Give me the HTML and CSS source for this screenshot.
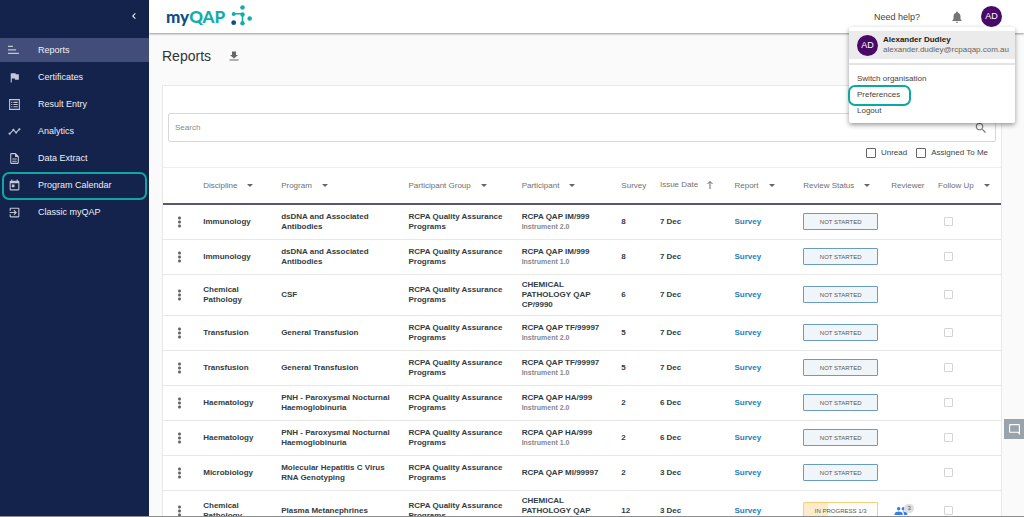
FILE: index.html
```html
<!DOCTYPE html>
<html lang="en">
<head>
<meta charset="utf-8">
<title>myQAP - Reports</title>
<link rel="stylesheet" href="styles.css">
</head>
<body>
<div class="shell">
  <aside class="sidebar">
    <div class="sidebar-top">
      <button class="collapse" aria-label="Collapse menu"><svg class="icon-xs" viewBox="0 0 24 24"><path d="M15.4 7.4 14 6l-6 6 6 6 1.4-1.4L10.800 12z"/></svg></button>
    </div>
    <nav class="nav">
      <a class="nav-item active" href="#"><svg class="icon-nav" viewBox="0 0 24 24"><path d="M0 3h9v2.500H0zM0 9.500h15V12H0zM0 16h20v2.500H0z"/></svg><span>Reports</span></a>
      <a class="nav-item" href="#"><svg class="icon-nav" viewBox="0 0 24 24"><path d="M14.400 6 14 4H5v17h2v-7h5.600l.4 2h7V6z"/></svg><span>Certificates</span></a>
      <a class="nav-item" href="#"><svg class="icon-nav" viewBox="0 0 24 24"><path d="M2 2v20h20V2H2zm18 18H4V4h16v16zM6 7h2v2H6zm0 4h2v2H6zm0 4h2v2H6zM10 7h8v2h-8zm0 4h8v2h-8zm0 4h8v2h-8z"/></svg><span>Result Entry</span></a>
      <a class="nav-item" href="#"><svg class="icon-nav" viewBox="0 0 24 24"><path d="M23 8c0 1.100-.9 2-2 2l-.5-.1-3.600 3.600.1.500a2 2 0 0 1-4 0l.1-.5-2.600-2.600-1 0-4.600 4.600.1.500a2 2 0 1 1-2-2l.5.1 4.600-4.600L8 9a2 2 0 0 1 4 0l-.1.500 2.600 2.600 1 0 3.600-3.600L19 8a2 2 0 0 1 4 0z"/></svg><span>Analytics</span></a>
      <a class="nav-item" href="#"><svg class="icon-nav" viewBox="0 0 24 24"><path d="M8 16h8v2H8zm0-4h8v2H8zm6-10H6a2 2 0 0 0-2 2v16c0 1.100.9 2 2 2h12a2 2 0 0 0 2-2V8l-6-6zm4 18H6V4h7v5h5v11z"/></svg><span>Data Extract</span></a>
      <a class="nav-item ringed" href="#"><svg class="icon-nav" viewBox="0 0 24 24"><path d="M19 3h-1V1h-2v2H8V1H6v2H5a2 2 0 0 0-2 2v14c0 1.100.9 2 2 2h14a2 2 0 0 0 2-2V5a2 2 0 0 0-2-2zm0 16H5V8h14v11zM7 10h5v5H7z"/></svg><span>Program Calendar</span></a>
      <a class="nav-item" href="#"><svg class="icon-nav" viewBox="0 0 24 24"><path d="m10.100 15.600 1.400 1.400 5-5-5-5-1.400 1.400 2.600 2.600H3v2h9.700zM19 3H5a2 2 0 0 0-2 2v4h2V5h14v14H5v-4H3v4c0 1.100.9 2 2 2h14a2 2 0 0 0 2-2V5a2 2 0 0 0-2-2z"/></svg><span>Classic myQAP</span></a>
    </nav>
  </aside>

  <div class="main">
    <header class="topbar">
      <a class="logo" href="#"><span class="logo-text"><span class="logo-my">my</span>QAP</span><svg class="logo-mark" viewBox="0 0 22 24"><g fill="#11ada9"><path stroke="#11ada9" stroke-width="1.600" fill="none" d="M2.500 8.700h9v9.500"/><circle cx="11.500" cy="2.500" r="2.300"/><circle cx="2.700" cy="9" r="2"/><circle cx="11.500" cy="9.500" r="2.200"/><circle cx="11.500" cy="18.200" r="2.200"/><circle cx="18.700" cy="13.500" r="2.300"/></g><circle cx="2.700" cy="17.700" r="2.400" fill="#0c4f8b"/></svg></a>
      <div class="topbar-right">
        <a class="help" href="#">Need help?</a>
        <button class="bell" aria-label="Notifications"><svg class="icon-md" viewBox="0 0 24 24"><path d="M12 22a2 2 0 0 0 2-2h-4c0 1.100.9 2 2 2zm6-6v-5c0-3.100-1.600-5.600-4.500-6.300V4a1.500 1.500 0 0 0-3 0v.7C7.600 5.400 6 7.900 6 11v5l-2 2v1h16v-1z"/></svg></button>
        <button class="avatar" aria-label="Account">AD</button>
      </div>
    </header>

    <div class="account-menu">
      <div class="account">
        <span class="avatar">AD</span>
        <div class="account-text"><strong>Alexander Dudley</strong><span>alexander.dudley@rcpaqap.com.au</span></div>
      </div>
      <div class="account-links">
        <a href="#">Switch organisation</a>
        <a class="ringed" href="#">Preferences</a>
        <a href="#">Logout</a>
      </div>
    </div>

    <main class="content">
      <div class="title-row">
        <h1>Reports</h1>
        <button class="download" aria-label="Download"><svg class="icon-sm" viewBox="0 0 24 24"><path d="M20 10h-4V3H8v7H4l8 7zM3 19v2h18v-2z"/></svg></button>
      </div>
      <section class="card">
        <div class="filters">
          <div class="search">
            <input type="text" placeholder="Search" aria-label="Search">
            <svg class="icon-md" viewBox="0 0 24 24"><path d="M15.500 14h-.8l-.3-.3a6.500 6.500 0 1 0-.7.7l.3.300v.8l5 5 1.500-1.500zm-6 0a4.500 4.500 0 1 1 0-9 4.500 4.500 0 0 1 0 9z"/></svg>
          </div>
          <div class="checks">
            <label><input class="check" type="checkbox">Unread</label>
            <label><input class="check" type="checkbox">Assigned To Me</label>
          </div>
        </div>
        <table class="reports">
          <colgroup><col class="c-menu"><col class="c-disc"><col class="c-prog"><col class="c-group"><col class="c-part"><col class="c-survey"><col class="c-date"><col class="c-report"><col class="c-status"><col class="c-reviewer"><col class="c-follow"></colgroup>
          <thead>
            <tr><th></th><th class="sort">Discipline</th><th class="sort">Program</th><th class="sort">Participant Group</th><th class="sort">Participant</th><th>Survey</th><th>Issue Date<svg class="arrow-up" viewBox="0 0 8 10"><path d="M4 9V1.500M1.500 4 4 1.500 6.500 4"/></svg></th><th class="sort">Report</th><th class="sort">Review Status</th><th>Reviewer</th><th class="sort">Follow Up</th></tr>
          </thead>
          <tbody>
            <tr><td><button class="more" aria-label="Row actions"></button></td><td>Immunology</td><td>dsDNA and Associated Antibodies</td><td>RCPA Quality Assurance Programs</td><td>RCPA QAP IM/999<small>Instrument 2.0</small></td><td>8</td><td>7 Dec</td><td><a href="#">Survey</a></td><td><button class="status">NOT STARTED</button></td><td></td><td><input class="follow" type="checkbox" aria-label="Follow up"></td></tr>
            <tr><td><button class="more" aria-label="Row actions"></button></td><td>Immunology</td><td>dsDNA and Associated Antibodies</td><td>RCPA Quality Assurance Programs</td><td>RCPA QAP IM/999<small>Instrument 1.0</small></td><td>8</td><td>7 Dec</td><td><a href="#">Survey</a></td><td><button class="status">NOT STARTED</button></td><td></td><td><input class="follow" type="checkbox" aria-label="Follow up"></td></tr>
            <tr><td><button class="more" aria-label="Row actions"></button></td><td>Chemical Pathology</td><td>CSF</td><td>RCPA Quality Assurance Programs</td><td>CHEMICAL PATHOLOGY QAP CP/9990</td><td>6</td><td>7 Dec</td><td><a href="#">Survey</a></td><td><button class="status">NOT STARTED</button></td><td></td><td><input class="follow" type="checkbox" aria-label="Follow up"></td></tr>
            <tr><td><button class="more" aria-label="Row actions"></button></td><td>Transfusion</td><td>General Transfusion</td><td>RCPA Quality Assurance Programs</td><td>RCPA QAP TF/99997<small>Instrument 2.0</small></td><td>5</td><td>7 Dec</td><td><a href="#">Survey</a></td><td><button class="status">NOT STARTED</button></td><td></td><td><input class="follow" type="checkbox" aria-label="Follow up"></td></tr>
            <tr><td><button class="more" aria-label="Row actions"></button></td><td>Transfusion</td><td>General Transfusion</td><td>RCPA Quality Assurance Programs</td><td>RCPA QAP TF/99997<small>Instrument 1.0</small></td><td>5</td><td>7 Dec</td><td><a href="#">Survey</a></td><td><button class="status">NOT STARTED</button></td><td></td><td><input class="follow" type="checkbox" aria-label="Follow up"></td></tr>
            <tr><td><button class="more" aria-label="Row actions"></button></td><td>Haematology</td><td>PNH - Paroxysmal Nocturnal Haemoglobinuria</td><td>RCPA Quality Assurance Programs</td><td>RCPA QAP HA/999<small>Instrument 2.0</small></td><td>2</td><td>6 Dec</td><td><a href="#">Survey</a></td><td><button class="status">NOT STARTED</button></td><td></td><td><input class="follow" type="checkbox" aria-label="Follow up"></td></tr>
            <tr><td><button class="more" aria-label="Row actions"></button></td><td>Haematology</td><td>PNH - Paroxysmal Nocturnal Haemoglobinuria</td><td>RCPA Quality Assurance Programs</td><td>RCPA QAP HA/999<small>Instrument 1.0</small></td><td>2</td><td>6 Dec</td><td><a href="#">Survey</a></td><td><button class="status">NOT STARTED</button></td><td></td><td><input class="follow" type="checkbox" aria-label="Follow up"></td></tr>
            <tr><td><button class="more" aria-label="Row actions"></button></td><td>Microbiology</td><td>Molecular Hepatitis C Virus RNA Genotyping</td><td>RCPA Quality Assurance Programs</td><td>RCPA QAP MI/99997</td><td>2</td><td>3 Dec</td><td><a href="#">Survey</a></td><td><button class="status">NOT STARTED</button></td><td></td><td><input class="follow" type="checkbox" aria-label="Follow up"></td></tr>
            <tr><td><button class="more" aria-label="Row actions"></button></td><td>Chemical Pathology</td><td>Plasma Metanephrines</td><td>RCPA Quality Assurance Programs</td><td>CHEMICAL PATHOLOGY QAP CP/9990</td><td>12</td><td>3 Dec</td><td><a href="#">Survey</a></td><td><button class="status progress">IN PROGRESS 1/3</button></td><td><span class="reviewers"><svg class="icon-people" viewBox="0 0 24 24"><path d="M16 11a3 3 0 1 0 0-6 3 3 0 0 0 0 6zm-8 0a3 3 0 1 0 0-6 3 3 0 0 0 0 6zm0 2c-2.300 0-7 1.200-7 3.500V19h14v-2.500C15 14.200 10.300 13 8 13zm8 0-1 .1c1.200.8 2 2 2 3.400V19h6v-2.500c0-2.300-4.700-3.500-7-3.500z"/></svg><span class="count">3</span></span></td><td><input class="follow" type="checkbox" aria-label="Follow up"></td></tr>
          </tbody>
        </table>
      </section>
    </main>
  </div>
  <button class="feedback" aria-label="Feedback"><svg class="icon-chat" viewBox="0 0 24 24"><path d="M22 4a2 2 0 0 0-2-2H4a2 2 0 0 0-2 2v12c0 1.100.9 2 2 2h14l4 4zm-2 13-1-1H4V4h16z"/></svg></button>
</div>
</body>
</html>
```
FILE: styles.css
```css
* { box-sizing: border-box; }

body {
  margin: 0;
  font-family: "Liberation Sans", Arial, sans-serif;
  font-size: 8px;
  line-height: 10px;
  color: #444;
}

button {
  font: inherit;
  color: inherit;
  padding: 0;
  border: 0;
  background: none;
}

a { color: inherit; text-decoration: none; }
svg { display: block; fill: currentColor; flex: none; }

.icon-xs { width: 12px; height: 12px; }
.icon-sm { width: 12px; height: 12px; }
.icon-md { width: 14px; height: 14px; }
.icon-nav { width: 13px; height: 13px; }
.icon-people { width: 14px; height: 14px; }
.icon-chat { width: 13px; height: 13px; }

.shell {
  display: flex;
  height: 100vh;
  overflow: hidden;
  background: #fafafa;
  border-bottom: 1px solid #8c8c8c;
}

/* Sidebar */
.sidebar {
  flex: 0 0 149px;
  background: #13234b;
  color: #fff;
}
.sidebar-top {
  height: 38px;
  padding: 10px 9px 0 0;
  display: flex;
  justify-content: flex-end;
  align-items: flex-start;
}
.nav { display: flex; flex-direction: column; gap: 3px; }
.nav-item {
  position: relative;
  display: flex;
  align-items: center;
  gap: 17px;
  height: 24px;
  padding-left: 8px;
  font-size: 9px;
  color: #eef0f5;
}
.nav-item svg { color: #c3c8d6; }
.nav-item.active { background: #424d7a; }

/* Teal emphasis ring */
.ringed { position: relative; }
.ringed::after {
  content: "";
  position: absolute;
  border: 2px solid #0ca9a4;
  border-radius: 7px;
}
.nav-item.ringed::after { inset: -1px 2px -3px 2px; }

/* Top bar */
.main {
  flex: 1;
  min-width: 0;
  position: relative;
  display: flex;
  flex-direction: column;
}
.topbar {
  flex: none;
  height: 33px;
  display: flex;
  justify-content: space-between;
  padding: 0 22px 0 17px;
  background: #fff;
  box-shadow: 0 1px 2px rgba(0, 0, 0, .4);
  z-index: 1;
}
.logo { display: flex; align-items: center; gap: 6px; color: #11ada9; }
.logo-text { font: 900 17px/24px Lato, sans-serif; }
.logo-my { color: #0c4f8b; }
.logo-mark { width: 22px; height: 24px; }
.topbar-right { display: flex; align-items: center; }
.help { font-size: 9px; margin-right: 30px; }
.bell { margin-right: 17px; color: #757575; }
.avatar {
  flex: none;
  width: 21px;
  height: 21px;
  border-radius: 50%;
  background: #480a66;
  color: #fff;
  font-size: 9px;
  line-height: 21px;
  text-align: center;
}

/* Account menu */
.account-menu {
  position: absolute;
  z-index: 2;
  top: 27px;
  right: 9px;
  width: 166px;
  padding: 4px 0 7px;
  border-radius: 2px;
  background: #fff;
  box-shadow: 0 2px 5px rgba(0, 0, 0, .4);
}
.account {
  display: flex;
  align-items: center;
  gap: 5px;
  height: 28px;
  padding-left: 8px;
  background: #ebebeb;
}
.account-text { display: flex; flex-direction: column; color: #666; }
.account-text strong { color: #222; }
.account-links {
  display: flex;
  flex-direction: column;
  align-items: flex-start;
  gap: 6px;
  margin-top: 4px;
  padding: 9px 8px 0;
  border-top: 2px solid #e4e4e4;
}
.account-links .ringed::after { inset: -5px -11px -6px -9px; }

/* Page content */
.content { padding: 0 22px 0 13px; }
.title-row {
  display: flex;
  align-items: center;
  gap: 17px;
  height: 52px;
  padding-bottom: 6px;
}
h1 { margin: 0; font-size: 14px; line-height: 18px; font-weight: 400; color: #333; }
.download { color: #666; }
.card { background: #fff; border: 1px solid #e8e8e8; }
.filters { padding: 27px 5px 9px; border-bottom: 1px solid #eee; }
.search {
  display: flex;
  align-items: center;
  height: 29px;
  padding: 0 7px 0 6px;
  border: 1px solid #d8d8d8;
  border-radius: 2px;
  color: #777;
}
.search input {
  flex: 1;
  border: 0;
  outline: 0;
  padding: 0;
  font: inherit;
  background: none;
}
.search input::placeholder { color: #888; }
.checks {
  display: flex;
  justify-content: flex-end;
  gap: 9px;
  padding: 6px 8px 0 0;
}
.checks label { display: flex; align-items: center; gap: 5px; }
.check, .follow {
  appearance: none;
  margin: 0;
  width: 10px;
  height: 10px;
  border: 1px solid #666;
  border-radius: 1px;
  background: #fff;
}

/* Reports table */
.reports {
  width: 100%;
  table-layout: fixed;
  border-collapse: collapse;
}
.c-menu { width: 4.8%; }
.c-disc { width: 9.3%; }
.c-prog { width: 15.2%; }
.c-group { width: 13.5%; }
.c-part { width: 11.9%; }
.c-survey { width: 4.6%; }
.c-date { width: 8.9%; }
.c-report { width: 8.2%; }
.c-status { width: 10.5%; }
.c-reviewer { width: 5.6%; }
.c-follow { width: 7.5%; }

.reports th {
  height: 36px;
  padding: 0;
  border-bottom: 2px solid #5a5575;
  font-weight: 400;
  text-align: left;
  white-space: nowrap;
  color: #707070;
}
.sort::after {
  content: "";
  display: inline-block;
  margin-left: 10px;
  vertical-align: middle;
  border: 3px solid transparent;
  border-top-color: #666;
  border-bottom: 0;
}
.arrow-up {
  display: inline-block;
  width: 8px;
  height: 10px;
  margin-left: 8px;
  vertical-align: middle;
  fill: none;
  stroke: #666;
}
.reports td {
  height: 35px;
  padding: 5px 16px 5px 0;
  border-bottom: 1px solid #e8e8e8;
  font-weight: 700;
  vertical-align: middle;
  color: #333c44;
}
.reports td:nth-child(1), .reports td:nth-child(n+6) { padding-right: 0; }
.reports small { display: block; font-size: 7px; color: #83898f; }
.reports a { color: #1b7fbd; }
.more {
  display: block;
  width: 3px;
  height: 12px;
  margin-left: 15px;
  background: radial-gradient(circle, #666 1px, transparent 2px) 0 0 / 3px 4px;
}
.status {
  display: block;
  width: 75px;
  height: 17px;
  border: 1px solid #6a9bc0;
  border-radius: 1px;
  background: #f0f5f9;
  font-size: 6px;
  font-weight: 400;
  color: #555;
}
.status.progress {
  border-color: #f9ce7c;
  background: linear-gradient(90deg, #fdebcb 33%, #fffdf9 33%);
}
.reviewers {
  display: flex;
  align-items: flex-start;
  padding-left: 3px;
  color: #3b7de9;
}
.count {
  width: 10px;
  height: 9px;
  margin-left: -4px;
  border-radius: 5px;
  background: #dedede;
  color: #555;
  font-size: 6px;
  line-height: 9px;
  font-weight: 400;
  text-align: center;
}
.follow { display: block; width: 9px; height: 9px; margin-left: 6px; border-color: #d4d4d4; }

/* Feedback tab */
.feedback {
  position: fixed;
  right: 0;
  top: 419px;
  width: 20px;
  height: 20px;
  display: grid;
  place-items: center;
  background: #98a3ab;
  color: #fff;
}
```
